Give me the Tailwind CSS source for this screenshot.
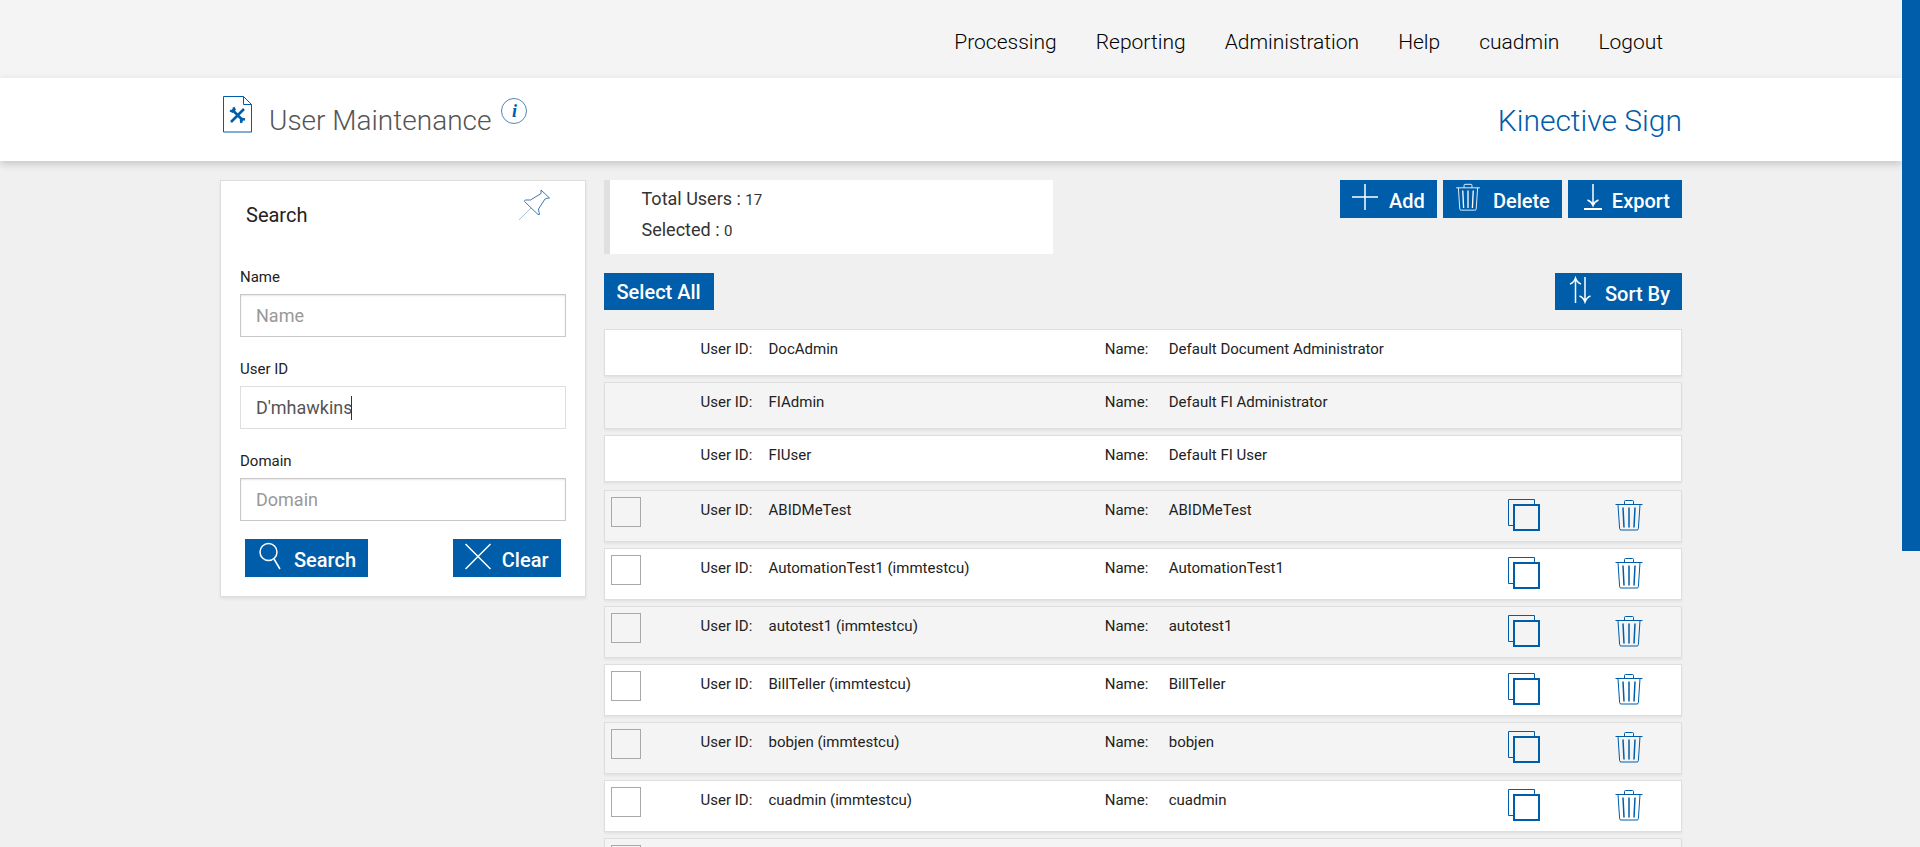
<!DOCTYPE html>
<html lang="en">
<head>
  <meta charset="UTF-8">
  <meta name="viewport" content="width=device-width, initial-scale=1.0">
  <title>User Maintenance</title>
  <script src="https://cdn.jsdelivr.net/npm/@tailwindcss/browser@4"></script>
</head>
<body class="flex h-screen overflow-hidden bg-[#f0f0f0] text-[#222] font-[Roboto,'Liberation_Sans',sans-serif]">

  <!-- icon sprite -->
  <svg class="hidden">
    <symbol id="i-trash" viewBox="0 0 28 32" fill="none" stroke="currentColor">
      <path d="M0.5 5.5h27M9.5 5.5v-3q0-1 1-1h7q1 0 1 1v3M3 5.5l1.6 24q.1 1.500 1.400 1.500h16q1.300 0 1.400-1.500l1.600-24"/>
      <path stroke-width="1.5" d="M8 8.500l1 20M14 8.500v20M20 8.500l-1 20"/>
    </symbol>
    <symbol id="i-copy" viewBox="0 0 32 32" fill="none" stroke="currentColor">
      <path d="M5 26.500H.5V.5h26V5"/>
      <path stroke-width="2" d="M6 6h25v25H6z"/>
    </symbol>
  </svg>

  <div class="flex-1 overflow-y-auto [scrollbar-width:none]">
    <header>
      <nav class="bg-[#f4f4f4]">
        <div class="flex justify-end gap-[39px] w-10/13 max-w-[1462px] mx-auto h-[78px] items-center pt-2 pr-[19px] text-[21px] font-light text-black">
          <a href="#">Processing</a>
          <a href="#">Reporting</a>
          <a href="#">Administration</a>
          <a href="#">Help</a>
          <a href="#">cuadmin</a>
          <a href="#">Logout</a>
        </div>
      </nav>
      <div class="relative bg-white shadow-[0_3px_8px_rgba(0,0,0,0.18)]">
        <div class="flex justify-between w-10/13 max-w-[1462px] mx-auto h-[83px] pt-[2px] items-center font-light">
          <div class="flex items-center">
            <svg class="w-[30px] h-[37px] ml-[3px] mb-3" viewBox="0 0 30 37" fill="none" stroke="#005da9">
              <path d="M.5.5h20l8 8v27.500H.5zM20.500.5v8h8"/>
              <path stroke-width="2.600" d="M9 13.500l11 11M21 13L8 26"/>
              <path stroke-width="2.400" d="M7 14.500l2.500 1 2-2-1-2.200M22 23.500l-2.500-.5-1.500 1.500.5 2.500"/>
            </svg>
            <h1 class="ml-4 text-[28px] text-[#555] leading-9">User Maintenance</h1>
            <button type="button" aria-label="Information" class="ml-[10px] mb-5 flex justify-center items-center w-[26px] h-[26px] rounded-full border border-[#5586b5] text-[#005da9] font-['Liberation_Serif',serif] italic font-bold text-[18px] leading-none">i</button>
          </div>
          <p class="text-[30px] text-[#005da9] leading-9">Kinective Sign</p>
        </div>
      </div>
    </header>

    <main class="flex items-start gap-[18px] w-10/13 max-w-[1462px] mx-auto pt-[19px]">
      <form class="w-1/4 shrink-0 bg-white border border-[#dedede] shadow-[0_2px_3px_rgba(0,0,0,0.07)] px-[19px] pb-[19px]">
        <div class="flex justify-between items-start h-[80px] pt-2 pl-[6px] pr-4">
          <h2 class="pt-3 text-[20px] leading-7">Search</h2>
          <button type="button" aria-label="Pin search panel">
            <svg class="w-8 h-8" viewBox="0 0 32 32" fill="none" stroke="#3f77b0">
              <path d="M23 1l8.500 8q-3 0-4.500 1l-6.500 10q.500 3.500 1 5.500h-1.500L6.500 12.500q0-1.500 1-1.500h5l10.500-6.500z"/>
              <path stroke="#a9bfd6" d="M13 19L1 31"/>
            </svg>
          </button>
        </div>
        <label for="name" class="block pt-1 text-[15px] leading-6">Name</label>
        <input id="name" type="text" placeholder="Name" class="mt-[5px] mb-5 block w-full h-[43px] px-[15px] border border-[#c8c8c8] shadow-[inset_0_1px_2px_rgba(0,0,0,0.1)] text-[18px] text-[#555] placeholder:text-[#999]">
        <label for="userid" class="block text-[15px] leading-6">User ID</label>
        <div class="mt-[5px] mb-5 flex items-center h-[43px] relative">
          <input id="userid" type="text" value="D'mhawkins" class="block w-full h-full px-[15px] border border-[#dedede] text-[18px] text-[#555]">
          <span class="absolute left-[111px] w-px h-6 bg-[#333]"></span>
        </div>
        <label for="domain" class="block text-[15px] leading-6">Domain</label>
        <input id="domain" type="text" placeholder="Domain" class="mt-[5px] block w-full h-[43px] px-[15px] border border-[#c8c8c8] shadow-[inset_0_1px_2px_rgba(0,0,0,0.1)] text-[18px] text-[#555] placeholder:text-[#999]">
        <div class="flex justify-between px-[5px] mt-[18px]">
          <button type="submit" class="flex h-[38px] px-3 bg-[#005da9] text-white text-[20px] font-medium leading-[42px]">
            <svg class="w-7 h-7 mt-[3px] mr-[9px]" viewBox="0 0 28 28" fill="none" stroke="currentColor" stroke-width="1.500"><circle cx="11.500" cy="10" r="8.500"/><path d="M17 17l6 10"/></svg>
            Search
          </button>
          <button type="reset" class="flex h-[38px] px-3 bg-[#005da9] text-white text-[20px] font-medium leading-[42px]">
            <svg class="w-[26px] h-7 mt-[3px] mr-[11px]" viewBox="0 0 26 28" fill="none" stroke="currentColor" stroke-width="1.500"><path d="M.5 2l25 25M25.500 2l-25 25"/></svg>
            Clear
          </button>
        </div>
      </form>

      <section class="flex-1">
        <div class="flex justify-between items-start">
          <div class="w-5/12 h-[74px] bg-white border-l-6 border-[#e0e0e0] pl-8 pt-1 text-[18px] leading-[30px] text-[#333]">
            <p>Total Users : <span class="text-[15px]">17</span></p>
            <p>Selected : <span class="text-[15px]">0</span></p>
          </div>
          <div class="flex gap-[6px]">
            <button type="button" class="flex h-[38px] px-3 bg-[#005da9] text-white text-[20px] font-medium leading-[42px]">
              <svg class="w-[26px] h-7 mt-[3px] mr-[11px]" viewBox="0 0 26 28" fill="none" stroke="currentColor" stroke-width="1.500"><path d="M0 14h26M13 1v26"/></svg>
              Add
            </button>
            <button type="button" class="flex h-[38px] px-3 bg-[#005da9] text-white text-[20px] font-medium leading-[42px]">
              <svg class="w-[26px] h-[28px] mt-[3px] mr-3"><use href="#i-trash"/></svg>
              Delete
            </button>
            <button type="button" class="flex h-[38px] px-3 bg-[#005da9] text-white text-[20px] font-medium leading-[42px]">
              <svg class="w-[26px] h-7 mt-[3px] mr-[6px]" viewBox="0 0 26 28" fill="none" stroke="currentColor" stroke-width="1.500"><path d="M13 1v21M7.500 17q4 1.500 5.500 5.500 1.500-4 5.500-5.500"/><path stroke-width="2" d="M4 26h18"/></svg>
              Export
            </button>
          </div>
        </div>

        <div class="flex justify-between mt-[19px]">
          <button type="button" class="h-[37px] px-[13px] bg-[#005da9] text-white text-[20px] font-medium leading-[38px]">Select All</button>
          <button type="button" class="flex h-[37px] px-3 bg-[#005da9] text-white text-[20px] font-medium leading-[42px]">
            <svg class="w-[26px] h-7 mt-[3px] mr-3" viewBox="0 0 26 28" fill="none" stroke="currentColor" stroke-width="1.500"><path d="M8.500 27V2M3 8q4-1.500 5.500-6 1.500 4.500 5.500 6M18 1v25M12.500 20q4 1.500 5.500 6 1.500-4.500 5.500-6"/></svg>
            Sort By
          </button>
        </div>

        <ul id="builtin" class="flex flex-col gap-[6px] mt-[19px]"></ul>
        <ul id="users" class="flex flex-col gap-[6px] mt-2"></ul>
      </section>
    </main>
  </div>

  <!-- scrollbar -->
  <div class="w-[18px] shrink-0 bg-[#f0f0f0]">
    <div class="h-[65%] bg-[#005da9]"></div>
  </div>

  <script>
    const builtin = [
      ["DocAdmin", "Default Document Administrator"],
      ["FIAdmin", "Default FI Administrator"],
      ["FIUser", "Default FI User"]
    ];
    const users = [
      ["ABIDMeTest", "ABIDMeTest"],
      ["AutomationTest1 (immtestcu)", "AutomationTest1"],
      ["autotest1 (immtestcu)", "autotest1"],
      ["BillTeller (immtestcu)", "BillTeller"],
      ["bobjen (immtestcu)", "bobjen"],
      ["cuadmin (immtestcu)", "cuadmin"],
      ["", ""]
    ];

    const cells = (id, name) => id ? `
      <div class="flex pt-[7px]"><span class="w-[68px] shrink-0">User ID:</span><span>${id}</span></div>
      <div class="flex pt-[7px]"><span class="w-16 shrink-0">Name:</span><span>${name}</span></div>` : "<div></div><div></div>";

    document.getElementById("builtin").innerHTML = builtin.map(([id, name]) => `
      <li class="grid grid-cols-[90px_404fr_403fr_107fr_66fr] h-[47px] pl-[6px] bg-white even:bg-[#f4f4f4] border border-[#dedede] shadow-[0_2px_2px_rgba(0,0,0,0.05)] text-[15px] leading-6">
        <div></div>${cells(id, name)}
      </li>`).join("");

    document.getElementById("users").innerHTML = users.map(([id, name]) => `
      <li class="grid grid-cols-[90px_404fr_403fr_107fr_66fr] h-[52px] pl-[6px] bg-white odd:bg-[#f4f4f4] border border-[#dedede] shadow-[0_2px_2px_rgba(0,0,0,0.05)] text-[15px] leading-6">
        <div class="pt-[6px]"><input type="checkbox" aria-label="Select ${id}" class="block appearance-none w-[30px] h-[30px] border border-[#a9a9a9]"></div>${cells(id, name)}
        <div class="pt-2"><button type="button" aria-label="Copy ${id}" class="block text-[#005da9]"><svg class="w-8 h-8"><use href="#i-copy"/></svg></button></div>
        <div class="pt-2"><button type="button" aria-label="Delete ${id}" class="block text-[#005da9]"><svg class="w-7 h-8"><use href="#i-trash"/></svg></button></div>
      </li>`).join("");
  </script>
</body>
</html>
